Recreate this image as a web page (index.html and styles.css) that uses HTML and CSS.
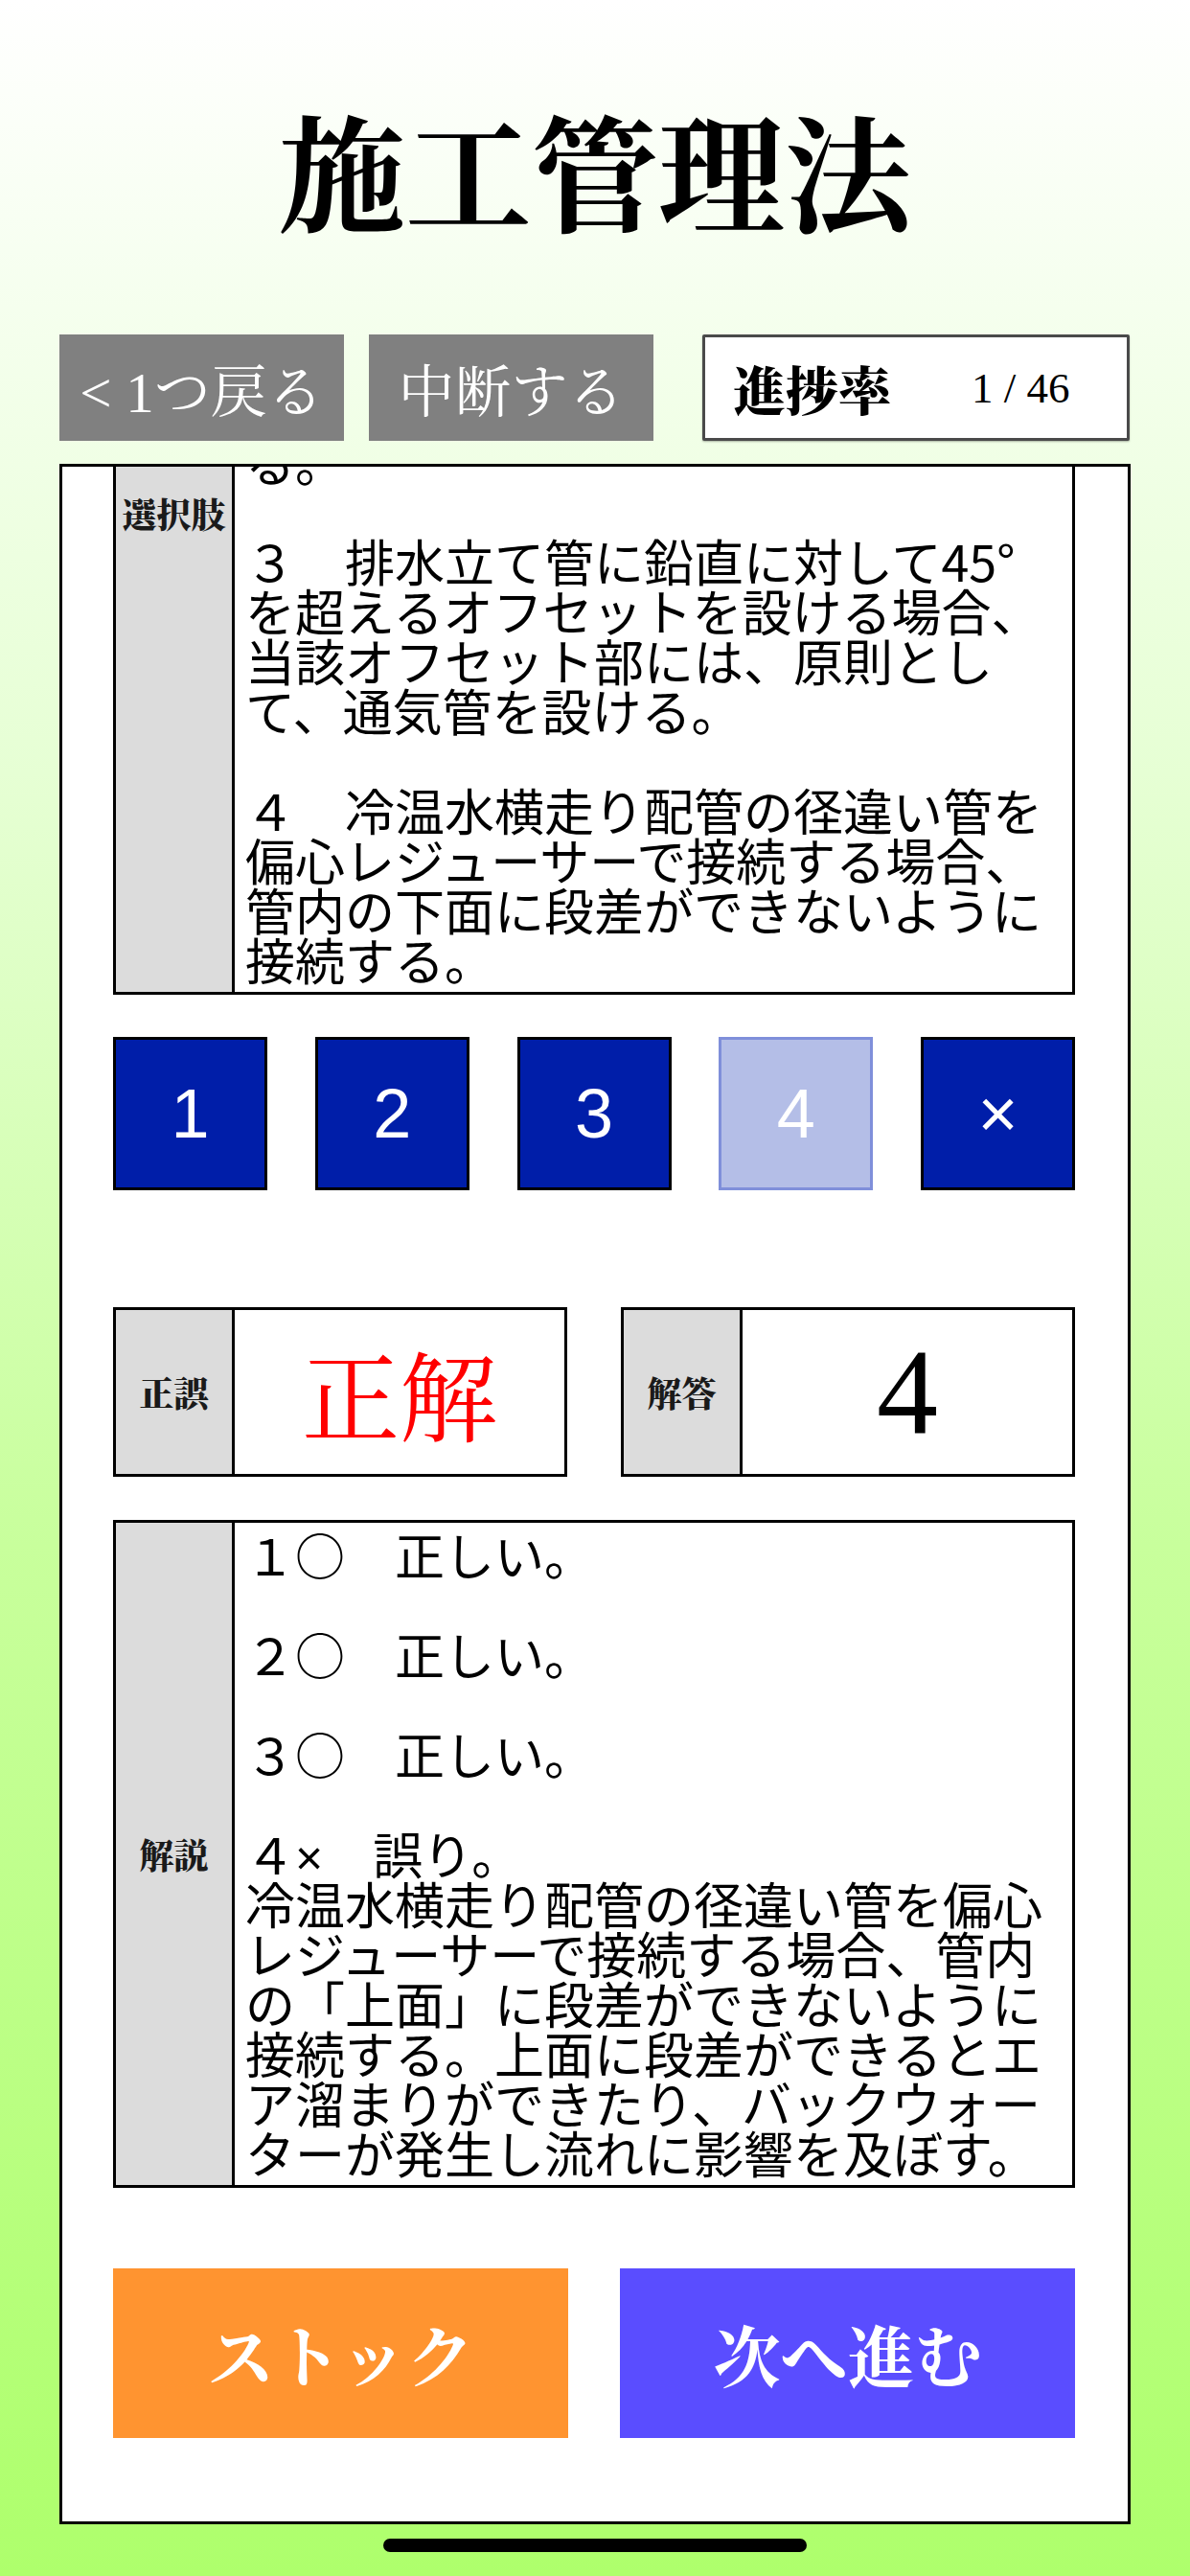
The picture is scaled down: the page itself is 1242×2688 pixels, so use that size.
FILE: index.html
```html
<!DOCTYPE html>
<html lang="ja">
<head>
<meta charset="utf-8">
<title>施工管理法</title>
<link rel="stylesheet" href="styles.css">
</head>
<body>
<div class="screen">
  <h1 class="title">施工管理法</h1>
  <div class="toolbar">
    <button class="tool-btn">&lt; 1つ戻る</button>
    <button class="tool-btn">中断する</button>
    <div class="progress"><span class="progress-label">進捗率</span><span class="progress-value">1 / 46</span></div>
  </div>
  <main class="panel">
    <div class="scroll">
      <section class="table choices">
        <div class="label label-top">選択肢</div>
        <div class="cell text">る。<br><br>３　排水立て管に鉛直に対して45°<br>を超えるオフセットを設ける場合、<br>当該オフセット部には、原則とし<br>て、通気管を設ける。<br><br>４　冷温水横走り配管の径違い管を<br>偏心レジューサーで接続する場合、<br>管内の下面に段差ができないように<br>接続する。</div>
      </section>
      <div class="answers">
        <button class="ans">1</button>
        <button class="ans">2</button>
        <button class="ans">3</button>
        <button class="ans disabled">4</button>
        <button class="ans">×</button>
      </div>
      <div class="results">
        <div class="table result">
          <div class="label">正誤</div>
          <div class="cell big red">正解</div>
        </div>
        <div class="table result">
          <div class="label">解答</div>
          <div class="cell big num">4</div>
        </div>
      </div>
      <section class="table explain">
        <div class="label">解説</div>
        <div class="cell text">１○　正しい。<br><br>２○　正しい。<br><br>３○　正しい。<br><br>４<span class="latin">×</span>　誤り。<br>冷温水横走り配管の径違い管を偏心<br>レジューサーで接続する場合、管内<br>の「上面」に段差ができないように<br>接続する。上面に段差ができるとエ<br>ア溜まりができたり、バックウォー<br>ターが発生し流れに影響を及ぼす。</div>
      </section>
      <div class="actions">
        <button class="action stock">ストック</button>
        <button class="action next">次へ進む</button>
      </div>
    </div>
  </main>
  <div class="home-indicator"></div>
</div>
</body>
</html>
```

FILE: styles.css
```css
* { box-sizing: border-box; }
html, body { margin: 0; padding: 0; }
body {
  width: 1242px;
  height: 2688px;
  overflow: hidden;
  font-family: "Noto Sans CJK JP", sans-serif;
}
.screen {
  width: 1242px;
  height: 2688px;
  background: linear-gradient(180deg, #ffffff 0%, #e6ffd4 30%, #c8ff9c 60%, #aeff6c 100%);
  display: flex;
  flex-direction: column;
  align-items: center;
}
.title {
  margin: 0;
  padding-top: 100px;
  height: 349px;
  line-height: 150px;
  font-size: 132px;
  font-weight: 700;
  font-family: "Noto Serif CJK JP", "Noto Sans CJK JP", serif;
  color: #000;
}
.toolbar {
  width: 1118px;
  height: 111px;
  display: flex;
}
.tool-btn {
  width: 297px;
  height: 111px;
  border: none;
  padding: 0;
  background: #808080;
  color: #fff;
  font-family: "Liberation Serif", "Noto Serif CJK JP", "Noto Sans CJK JP", serif;
  font-size: 59px;
  display: flex;
  align-items: center;
  justify-content: center;
}
.tool-btn + .tool-btn { margin-left: 26px; }
.progress {
  margin-left: 51px;
  width: 446px;
  height: 111px;
  border: 3px solid #4a4a4a;
  border-radius: 2px;
  background: #fff;
  display: flex;
  align-items: center;
  padding-left: 29px;
  box-shadow: 0 1px 2px rgba(0,0,0,0.3);
}
.progress-label {
  font-family: "Noto Serif CJK JP", "Noto Sans CJK JP", serif;
  font-weight: 900;
  font-size: 55px;
  color: #000;
}
.progress-value {
  margin-left: 84px;
  font-family: "Liberation Serif", serif;
  font-size: 45px;
  color: #000;
}
.panel {
  margin-top: 24px;
  width: 1118px;
  height: 2150px;
  border: 3px solid #000;
  background: #fff;
  overflow: hidden;
}
.scroll {
  padding: 0 55px 0 53px;
}
.table {
  display: flex;
  border: 3px solid #000;
  background: #fff;
}
.label {
  width: 121px;
  flex: none;
  background: #dcdcdc;
  display: flex;
  align-items: center;
  justify-content: center;
  font-family: "Noto Serif CJK JP", "Noto Sans CJK JP", serif;
  font-weight: 900;
  font-size: 36px;
  line-height: 36px;
  color: #1a1a1a;
}
.cell {
  flex: 1;
  border-left: 3px solid #000;
}
.text {
  font-family: "Noto Sans CJK JP", sans-serif;
  font-size: 52px;
  line-height: 52px;
  padding: 8px 8px 8px 11px;
  color: #000;
}
.latin {
  font-family: "Liberation Sans", Arial, sans-serif;
  font-size: 50px;
  line-height: 0;
}
.choices { margin-top: -43px; }
.label-top {
  align-items: flex-start;
  padding-top: 71px;
}
.answers {
  margin-top: 44px;
  display: flex;
  justify-content: space-between;
}
.ans {
  width: 161px;
  height: 160px;
  border: 3px solid #000;
  background: #001ea9;
  color: #fff;
  font-family: "Liberation Sans", Arial, sans-serif;
  font-size: 72px;
  padding: 0;
  display: flex;
  align-items: center;
  justify-content: center;
}
.ans.disabled {
  background: #b4bee7;
  border-color: #7f8fda;
}
.results {
  margin-top: 122px;
  display: flex;
  justify-content: space-between;
}
.result {
  width: 474px;
  height: 177px;
}
.big {
  display: flex;
  align-items: center;
  justify-content: center;
}
.red {
  color: #ff0000;
  font-family: "Noto Serif CJK JP", "Noto Sans CJK JP", serif;
  font-size: 102px;
}
.num {
  color: #000;
  font-family: "Liberation Serif", serif;
  font-size: 128px;
}
.explain { margin-top: 45px; }
.explain .text { padding-top: 7px; }
.actions {
  margin-top: 84px;
  display: flex;
  justify-content: space-between;
}
.action {
  width: 475px;
  height: 177px;
  border: none;
  padding: 0;
  color: #fff;
  font-family: "Noto Serif CJK JP", "Noto Sans CJK JP", serif;
  font-weight: 700;
  font-size: 70px;
}
.stock { background: #ff9430; }
.next { background: #5a4dff; }
.home-indicator {
  margin-top: 15px;
  width: 442px;
  height: 14px;
  border-radius: 7px;
  background: #000;
}
```
